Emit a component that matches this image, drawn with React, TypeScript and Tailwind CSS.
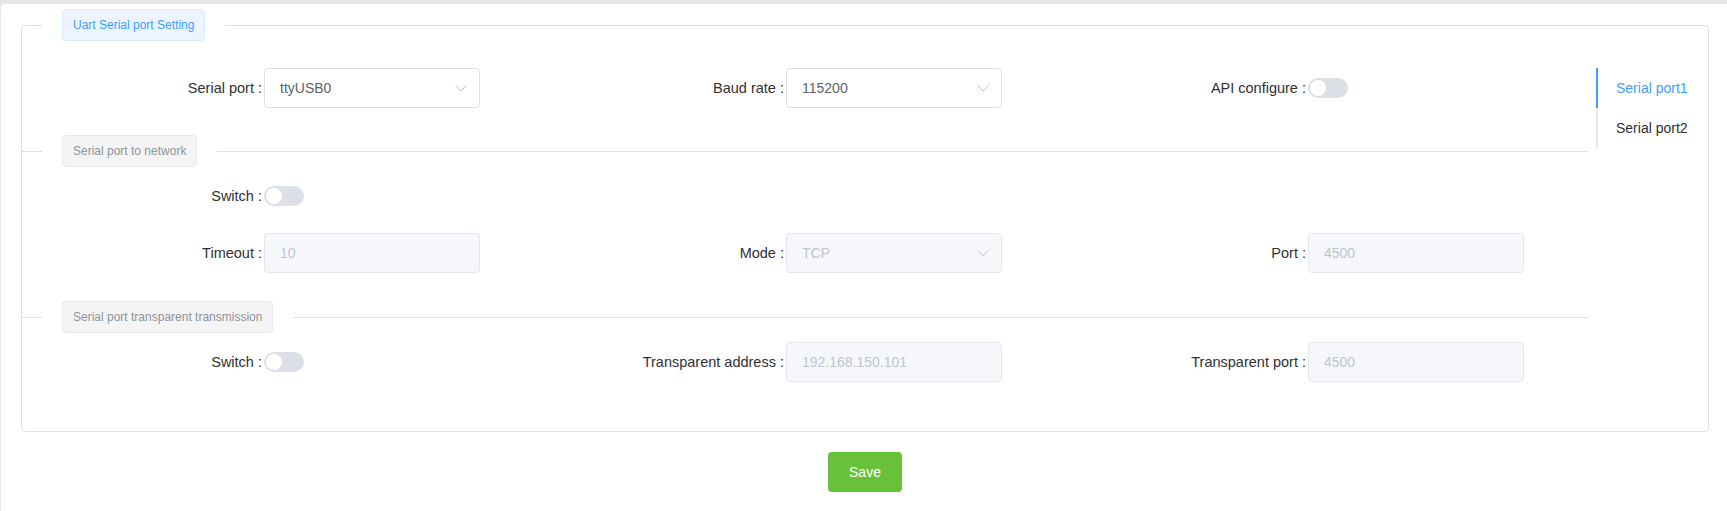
import React from "react";

const Chevron = () => (
  <svg width="12" height="7" viewBox="0 0 12 7" fill="none" className="shrink-0">
    <path d="M0.5 0.5 L6 6 L11.5 0.5" stroke="#c0c4cc" strokeWidth="1" />
  </svg>
);

function Label({ text }: { text: string }) {
  return (
    <div className="w-[242px] shrink-0 text-right pr-[2px] text-[14.5px] text-[#303133] leading-[40px] whitespace-nowrap">
      {text} :
    </div>
  );
}

function SelectBox({ value, disabled }: { value: string; disabled?: boolean }) {
  return (
    <div
      className={
        disabled
          ? "w-[216px] h-[40px] rounded-[4px] border border-[#e4e7ed] bg-[#f5f7fa] flex items-center justify-between pl-[15px] pr-[12px] text-[14px] text-[#c0c4cc]"
          : "w-[216px] h-[40px] rounded-[4px] border border-[#dcdfe6] bg-white flex items-center justify-between pl-[15px] pr-[12px] text-[14px] text-[#606266]"
      }
    >
      <span>{value}</span>
      <Chevron />
    </div>
  );
}

function InputBox({ value }: { value: string }) {
  return (
    <div className="w-[216px] h-[40px] rounded-[4px] border border-[#e4e7ed] bg-[#f5f7fa] flex items-center pl-[15px] text-[14px] text-[#c0c4cc]">
      {value}
    </div>
  );
}

function Switch() {
  return (
    <div className="relative w-[40px] h-[20px] rounded-full bg-[#dcdfe6] shrink-0">
      <div className="absolute left-[2px] top-[2px] w-[16px] h-[16px] rounded-full bg-white" />
    </div>
  );
}

function Item({ label, children }: { label: string; children?: React.ReactNode }) {
  return (
    <div className="flex items-center h-[40px]">
      <Label text={label} />
      {children}
    </div>
  );
}

function SectionHeader({ title, className }: { title: string; className: string }) {
  return (
    <div className={"flex items-center " + className}>
      <div className="w-[20px] h-px bg-[#dcdfe6]" />
      <div className="mx-[20px] h-[32px] px-[10px] flex items-center rounded-[4px] border border-[#e9e9eb] bg-[#f4f4f5] text-[12px] text-[#909399] whitespace-nowrap">
        {title}
      </div>
      <div className="flex-1 h-px bg-[#dcdfe6]" />
    </div>
  );
}

export default function App() {
  return (
    <div className="min-h-[511px] bg-[#e6e6e6] pt-[4px] font-['Liberation_Sans',Arial,sans-serif]">
      <div className="bg-white border-l border-[#e4e7ed] rounded-tl-[4px] min-h-[507px] pt-[5px] pl-[20px] pr-[18px]">
        <fieldset className="border border-[#dcdfe6] rounded-[4px] pb-[49px]">
          <legend className="ml-[20px] px-[20px]">
            <div className="h-[32px] px-[10px] flex items-center rounded-[4px] border border-[#d9ecff] bg-[#ecf5ff] text-[12px] text-[#409eff] whitespace-nowrap">
              Uart Serial port Setting
            </div>
          </legend>
          <div className="flex">
            <div className="flex-1 min-w-0">
              <div className="grid grid-cols-[522px_522px_1fr] mt-[27px]">
                <Item label="Serial port">
                  <SelectBox value="ttyUSB0" />
                </Item>
                <Item label="Baud rate">
                  <SelectBox value="115200" />
                </Item>
                <Item label="API configure">
                  <Switch />
                </Item>
              </div>

              <SectionHeader title="Serial port to network" className="mt-[27px]" />

              <div className="grid grid-cols-[522px_522px_1fr] mt-[9px]">
                <Item label="Switch">
                  <Switch />
                </Item>
              </div>
              <div className="grid grid-cols-[522px_522px_1fr] mt-[17px]">
                <Item label="Timeout">
                  <InputBox value="10" />
                </Item>
                <Item label="Mode">
                  <SelectBox value="TCP" disabled />
                </Item>
                <Item label="Port">
                  <InputBox value="4500" />
                </Item>
              </div>

              <SectionHeader title="Serial port transparent transmission" className="mt-[28px]" />

              <div className="grid grid-cols-[522px_522px_1fr] mt-[9px]">
                <Item label="Switch">
                  <Switch />
                </Item>
                <Item label="Transparent address">
                  <InputBox value="192.168.150.101" />
                </Item>
                <Item label="Transparent port">
                  <InputBox value="4500" />
                </Item>
              </div>
            </div>
            <div className="w-[120px] shrink-0 pl-[8px] pt-[27px]">
              <div className="h-[40px] flex items-center pl-[18px] border-l-2 border-[#409eff] text-[14px] text-[#409eff] whitespace-nowrap">
                Serial port1
              </div>
              <div className="h-[40px] flex items-center pl-[18px] border-l-2 border-[#e4e7ed] text-[14px] text-[#303133] whitespace-nowrap">
                Serial port2
              </div>
            </div>
          </div>
        </fieldset>
        <div className="flex justify-center mt-[20px]">
          <button className="w-[74px] h-[40px] rounded-[4px] bg-[#67c23a] text-white text-[14px]">
            Save
          </button>
        </div>
      </div>
    </div>
  );
}
